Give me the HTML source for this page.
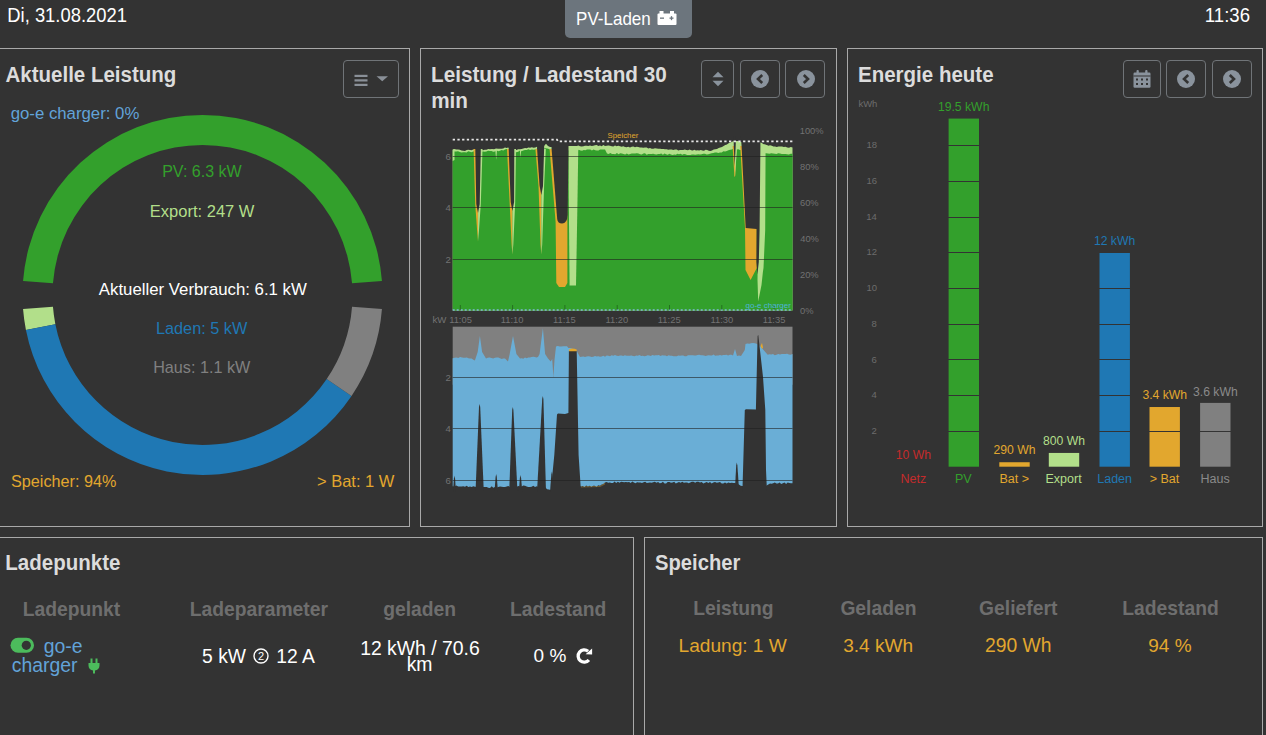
<!DOCTYPE html>
<html><head><meta charset="utf-8"><title>openWB</title>
<style>
html,body{margin:0;padding:0;background:#333333;width:1266px;height:735px;overflow:hidden;position:relative;font-family:"Liberation Sans",sans-serif}
.t{position:absolute;white-space:nowrap;font-family:"Liberation Sans",sans-serif}
.card{position:absolute;border:1px solid #a9a9a9;box-sizing:content-box}
.btn{position:absolute;border:1px solid #707478;border-radius:4px}
</style></head><body>
<div class="t" style="left:7.30px;top:6.90px;font-size:18.4px;line-height:18.4px;color:#ffffff;transform-origin:0 15.00px;transform:scaleY(1.08);">Di, 31.08.2021</div><div class="t" style="left:1204.83px;top:7.10px;font-size:18.6px;line-height:18.6px;color:#ffffff;transform-origin:0 15.00px;transform:scaleY(1.08);">11:36</div><div style="position:absolute;left:565px;top:-6px;width:127px;height:44px;background:#6c757d;border-radius:5px"></div><div class="t" style="left:576.12px;top:10.90px;font-size:17.0px;line-height:17.0px;color:#ffffff;transform-origin:0 14.00px;transform:scaleY(1.07);">PV-Laden</div><svg style="position:absolute;left:657px;top:11px" width="20" height="15" viewBox="0 0 20 15">
<rect x="2.5" y="0" width="4" height="3" fill="#fff"/><rect x="13" y="0" width="4" height="3" fill="#fff"/>
<rect x="0.5" y="2.5" width="19" height="11.5" rx="1" fill="#fff"/>
<rect x="3" y="6.5" width="4" height="1.3" fill="#6c757d"/>
<rect x="12.5" y="6.5" width="4" height="1.3" fill="#6c757d"/><rect x="13.85" y="5.15" width="1.3" height="4" fill="#6c757d"/>
</svg><div class="card" style="left:-10px;top:48px;width:418px;height:477px"></div><div class="card" style="left:420px;top:48px;width:415px;height:477px"></div><div class="card" style="left:847px;top:48px;width:414px;height:477px"></div><div class="card" style="left:-10px;top:537px;width:642px;height:222px"></div><div class="card" style="left:644px;top:537px;width:617px;height:222px"></div><div class="t" style="left:5.50px;top:64.90px;font-size:20.5px;line-height:20.5px;color:#dcdcdc;font-weight:700;transform-origin:0 17.00px;transform:scaleY(1.07);">Aktuelle Leistung</div><div class="btn" style="left:343px;top:60px;width:54px;height:36px"></div><svg style="position:absolute;left:343px;top:60px" width="57" height="38">
<rect x="11.5" y="14.8" width="13" height="2.2" fill="#8a9098"/>
<rect x="11.5" y="19.3" width="13" height="2.2" fill="#8a9098"/>
<rect x="11.5" y="23.8" width="13" height="2.2" fill="#8a9098"/>
<path d="M33.5 16.2 L45 16.2 L39.25 21.2 Z" fill="#8a9098"/>
</svg><div class="t" style="left:10.65px;top:105.80px;font-size:16.8px;line-height:16.8px;color:#62a3d9;">go-e charger: 0%</div><svg style="position:absolute;left:0;top:0" width="420" height="527"><path d="M381.95,280.88 A180.0,180.0 0 0 0 23.05,280.88 L52.96,283.23 A150.0,150.0 0 0 1 352.04,283.23 Z" fill="#33a02c"/><path d="M23.05,309.12 A180.0,180.0 0 0 0 25.93,329.96 L55.36,324.14 A150.0,150.0 0 0 1 52.96,306.77 Z" fill="#b2df8a"/><path d="M25.93,329.96 A180.0,180.0 0 0 0 351.55,395.92 L326.71,379.10 A150.0,150.0 0 0 1 55.36,324.14 Z" fill="#1f78b4"/><path d="M351.55,395.92 A180.0,180.0 0 0 0 381.95,309.12 L352.04,306.77 A150.0,150.0 0 0 1 326.71,379.10 Z" fill="#808080"/></svg><div class="t" style="left:162.19px;top:163.80px;font-size:16.0px;line-height:16.0px;color:#33a02c;">PV: 6.3 kW</div><div class="t" style="left:149.86px;top:202.80px;font-size:16.5px;line-height:16.5px;color:#b2df8a;">Export: 247 W</div><div class="t" style="left:98.85px;top:281.90px;font-size:16.8px;line-height:16.8px;color:#ffffff;">Aktueller Verbrauch: 6.1 kW</div><div class="t" style="left:155.95px;top:320.00px;font-size:16.3px;line-height:16.3px;color:#1f78b4;">Laden: 5 kW</div><div class="t" style="left:153.16px;top:358.70px;font-size:16.2px;line-height:16.2px;color:#808080;">Haus: 1.1 kW</div><div class="t" style="left:11.05px;top:473.20px;font-size:16.2px;line-height:16.2px;color:#e2a72e;">Speicher: 94%</div><div class="t" style="left:316.93px;top:472.90px;font-size:16.5px;line-height:16.5px;color:#e2a72e;">&gt; Bat: 1 W</div><div class="t" style="left:431.02px;top:65.00px;font-size:20.7px;line-height:20.7px;color:#dcdcdc;font-weight:700;transform-origin:0 17.00px;transform:scaleY(1.07);">Leistung / Ladestand 30</div><div class="t" style="left:431.23px;top:91.00px;font-size:20.7px;line-height:20.7px;color:#dcdcdc;font-weight:700;transform-origin:0 17.00px;transform:scaleY(1.07);">min</div><div class="btn" style="left:701px;top:60px;width:31px;height:36px"></div><div class="btn" style="left:740px;top:60px;width:38px;height:36px"></div><div class="btn" style="left:785px;top:60px;width:38px;height:36px"></div><svg style="position:absolute;left:701px;top:60px" width="34" height="38">
<path d="M11.5 17.2 L17 11.8 L22.5 17.2 Z" fill="#8a939d"/>
<path d="M11.5 20.8 L17 26.2 L22.5 20.8 Z" fill="#8a939d"/>
</svg><svg style="position:absolute;left:750px;top:69px" width="20" height="20" viewBox="-10 -10 20 20">
<circle cx="0" cy="0" r="9" fill="#8a939d"/><path d="M2.2,-4 L-2,0 L2.2,4" stroke="#333" stroke-width="2.6" fill="none" stroke-linecap="butt" stroke-linejoin="miter"/></svg><svg style="position:absolute;left:795.5px;top:69px" width="20" height="20" viewBox="-10 -10 20 20">
<circle cx="0" cy="0" r="9" fill="#8a939d"/><path d="M-2.2,-4 L2,0 L-2.2,4" stroke="#333" stroke-width="2.6" fill="none" stroke-linecap="butt" stroke-linejoin="miter"/></svg><div class="t" style="left:858.02px;top:64.80px;font-size:20.5px;line-height:20.5px;color:#dcdcdc;font-weight:700;transform-origin:0 17.00px;transform:scaleY(1.07);">Energie heute</div><div class="btn" style="left:1123px;top:60px;width:36px;height:36px"></div><div class="btn" style="left:1166px;top:60px;width:38px;height:36px"></div><div class="btn" style="left:1212px;top:60px;width:38px;height:36px"></div><svg style="position:absolute;left:1123px;top:60px" width="38" height="38">
<rect x="10.5" y="12.5" width="17" height="15.2" rx="1.2" fill="#8a939d"/>
<rect x="13.5" y="10" width="2.3" height="4" rx="1" fill="#8a939d"/><rect x="22.2" y="10" width="2.3" height="4" rx="1" fill="#8a939d"/>
<rect x="10.5" y="15.5" width="17" height="1" fill="#333"/>
<rect x="13" y="18.5" width="2" height="2" fill="#333"/><rect x="18" y="18.5" width="2" height="2" fill="#333"/><rect x="23" y="18.5" width="2" height="2" fill="#333"/>
<rect x="13" y="23" width="2" height="2" fill="#333"/><rect x="18" y="23" width="2" height="2" fill="#333"/><rect x="23" y="23" width="2" height="2" fill="#333"/>
</svg><svg style="position:absolute;left:1176px;top:69px" width="20" height="20" viewBox="-10 -10 20 20">
<circle cx="0" cy="0" r="9" fill="#8a939d"/><path d="M2.2,-4 L-2,0 L2.2,4" stroke="#333" stroke-width="2.6" fill="none" stroke-linecap="butt" stroke-linejoin="miter"/></svg><svg style="position:absolute;left:1222px;top:69px" width="20" height="20" viewBox="-10 -10 20 20">
<circle cx="0" cy="0" r="9" fill="#8a939d"/><path d="M-2.2,-4 L2,0 L-2.2,4" stroke="#333" stroke-width="2.6" fill="none" stroke-linecap="butt" stroke-linejoin="miter"/></svg><div class="t" style="left:5.33px;top:552.50px;font-size:20.5px;line-height:20.5px;color:#dcdcdc;font-weight:700;transform-origin:0 17.00px;transform:scaleY(1.07);">Ladepunkte</div><div class="t" style="left:22.71px;top:599.60px;font-size:19.3px;line-height:19.3px;color:#6e6e6e;font-weight:700;">Ladepunkt</div><div class="t" style="left:189.70px;top:599.60px;font-size:19.3px;line-height:19.3px;color:#6e6e6e;font-weight:700;">Ladeparameter</div><div class="t" style="left:383.21px;top:599.60px;font-size:19.3px;line-height:19.3px;color:#6e6e6e;font-weight:700;">geladen</div><div class="t" style="left:509.88px;top:599.60px;font-size:19.3px;line-height:19.3px;color:#6e6e6e;font-weight:700;">Ladestand</div><svg style="position:absolute;left:10px;top:637px" width="25" height="17">
<rect x="0.5" y="0.8" width="23.5" height="15" rx="7.5" fill="#4cbb5c"/>
<circle cx="16.3" cy="8.3" r="4.6" fill="#333"/>
<circle cx="16.3" cy="8.3" r="2" fill="#4cbb5c" opacity="0.0"/>
</svg><div class="t" style="left:43.75px;top:636.80px;font-size:19.4px;line-height:19.4px;color:#62a3d9;">go-e</div><div class="t" style="left:11.75px;top:655.50px;font-size:19.4px;line-height:19.4px;color:#62a3d9;">charger</div><svg style="position:absolute;left:88px;top:658px" width="12" height="16" viewBox="0 0 12 16">
<rect x="2.5" y="0.5" width="2" height="5" fill="#4cbb5c"/><rect x="7.5" y="0.5" width="2" height="5" fill="#4cbb5c"/>
<path d="M0.5 5 H11.5 V7.5 C11.5 10.5 9.5 12 7 12.5 V15.5 H5 V12.5 C2.5 12 0.5 10.5 0.5 7.5 Z" fill="#4cbb5c"/>
</svg><div class="t" style="left:202.05px;top:647.00px;font-size:19.3px;line-height:19.3px;color:#ffffff;">5 kW</div><svg style="position:absolute;left:252px;top:647px" width="18" height="18" viewBox="0 0 18 18">
<circle cx="9" cy="9" r="7" fill="none" stroke="#fff" stroke-width="1.4"/>
<text x="9" y="13.2" font-family="Liberation Sans" font-size="11" font-weight="400" fill="#fff" text-anchor="middle">2</text></svg><div class="t" style="left:276.20px;top:647.00px;font-size:19.3px;line-height:19.3px;color:#ffffff;">12 A</div><div class="t" style="left:360.14px;top:638.60px;font-size:19.4px;line-height:19.4px;color:#ffffff;">12 kWh / 70.6</div><div class="t" style="left:406.66px;top:654.50px;font-size:19.4px;line-height:19.4px;color:#ffffff;">km</div><div class="t" style="left:533.55px;top:645.80px;font-size:19.0px;line-height:19.0px;color:#ffffff;">0 %</div><svg style="position:absolute;left:575px;top:647px" width="19" height="19" viewBox="0 0 19 19">
<path d="M13.9,13.0 A6.1,6.1 0 1 1 13.1,4.3" stroke="#fff" stroke-width="3.3" fill="none"/>
<path d="M10.6,7.3 L17.1,1.6 L17.1,7.6 Z" fill="#fff"/>
</svg><div class="t" style="left:655.08px;top:552.60px;font-size:20.2px;line-height:20.2px;color:#dcdcdc;font-weight:700;transform-origin:0 17.00px;transform:scaleY(1.07);">Speicher</div><div class="t" style="left:693.17px;top:599.40px;font-size:19.3px;line-height:19.3px;color:#6e6e6e;font-weight:700;">Leistung</div><div class="t" style="left:840.39px;top:599.40px;font-size:19.3px;line-height:19.3px;color:#6e6e6e;font-weight:700;">Geladen</div><div class="t" style="left:979.09px;top:599.40px;font-size:19.3px;line-height:19.3px;color:#6e6e6e;font-weight:700;">Geliefert</div><div class="t" style="left:1122.28px;top:599.40px;font-size:19.3px;line-height:19.3px;color:#6e6e6e;font-weight:700;">Ladestand</div><div class="t" style="left:678.56px;top:635.60px;font-size:19.1px;line-height:19.1px;color:#e2a72e;">Ladung: 1 W</div><div class="t" style="left:843.19px;top:635.60px;font-size:19.1px;line-height:19.1px;color:#e2a72e;">3.4 kWh</div><div class="t" style="left:984.94px;top:635.80px;font-size:19.3px;line-height:19.3px;color:#e2a72e;">290 Wh</div><div class="t" style="left:1148.25px;top:635.80px;font-size:19.0px;line-height:19.0px;color:#e2a72e;">94 %</div>
<svg style="position:absolute;left:0;top:0" width="1266" height="735"><polygon points="452.7,310.4 452.7,149.2 454.5,149.0 456.2,149.5 458.0,149.6 459.8,149.8 461.5,150.4 463.2,150.8 465.0,151.0 466.7,150.1 468.3,149.7 470.0,150.0 471.6,150.2 473.2,149.4 474.8,149.5 476.4,149.3 478.1,150.3 479.7,149.8 481.3,150.0 483.0,150.2 484.8,149.7 486.5,149.7 488.3,148.9 490.0,149.2 492.0,149.1 494.0,149.2 496.0,148.5 498.0,148.7 500.0,148.8 501.6,148.8 503.3,148.5 504.9,147.5 506.6,148.1 508.2,147.5 509.8,148.2 511.5,148.5 513.1,148.8 514.8,150.0 516.5,150.1 518.2,149.3 519.9,149.3 521.6,149.1 523.3,148.6 525.0,148.0 526.7,148.3 528.4,147.5 530.1,147.8 531.9,147.2 533.6,147.7 535.3,147.4 537.0,146.8 538.8,146.1 540.5,146.0 542.2,145.9 544.0,146.0 546.0,143.8 548.0,146.0 550.0,147.0 552.2,147.0 553.8,146.8 555.5,147.0 557.1,146.5 558.7,146.6 560.4,146.4 562.0,146.2 563.6,146.4 565.2,146.3 566.9,146.6 568.5,146.0 570.1,146.2 571.8,146.5 573.5,146.4 575.1,146.5 576.8,146.1 578.4,145.5 580.0,146.3 581.7,146.4 583.4,146.3 585.0,145.8 586.7,145.8 588.3,146.0 590.0,145.4 591.7,146.1 593.3,145.7 595.0,145.3 596.7,145.0 598.3,146.0 600.0,145.5 601.7,146.2 603.3,145.1 605.0,146.1 606.7,145.7 608.3,145.4 610.0,145.7 611.7,146.3 613.3,146.5 615.0,145.6 616.7,146.3 618.3,145.7 620.0,146.3 621.7,146.7 623.3,146.3 625.0,147.1 626.7,147.3 628.3,146.8 630.0,147.5 631.7,146.8 633.3,146.6 635.0,147.3 636.7,146.7 638.3,147.0 640.0,147.5 641.7,147.5 643.3,147.8 645.0,147.4 646.7,147.4 648.3,148.5 650.0,147.9 651.7,148.8 653.3,148.8 655.0,148.3 656.7,148.5 658.3,148.7 660.0,148.8 661.7,149.1 663.3,149.1 665.0,149.2 666.7,149.3 668.3,149.8 670.0,149.4 671.7,149.4 673.3,149.9 675.0,149.4 676.7,149.6 678.3,150.5 680.0,150.0 681.6,150.1 683.2,150.1 684.8,149.5 686.4,150.0 688.0,150.2 689.6,149.6 691.2,150.3 692.8,150.4 694.4,149.7 696.0,150.4 697.6,150.2 699.2,150.5 700.8,150.1 702.4,150.6 704.0,150.7 705.6,149.8 707.2,149.9 708.8,150.7 710.4,151.0 712.0,150.5 713.7,149.6 715.3,149.3 717.0,148.9 718.7,148.0 720.3,147.4 722.0,147.0 723.6,145.9 725.3,145.1 726.9,144.5 728.6,143.2 730.2,142.4 731.9,142.0 733.5,140.8 736.0,141.0 738.0,140.9 740.0,142.0 741.7,142.1 743.4,142.4 745.1,141.9 746.8,141.8 748.5,142.6 750.2,141.9 751.9,141.9 753.6,142.3 755.3,142.6 757.0,141.9 758.7,142.2 760.4,142.5 762.0,143.0 763.7,144.4 765.3,144.7 766.9,144.9 768.5,145.7 770.1,145.2 771.8,145.7 773.4,146.4 775.0,146.5 776.8,147.1 778.5,146.6 780.2,146.5 782.0,146.4 783.8,147.0 785.5,146.7 787.2,147.6 789.0,147.7 790.8,147.0 792.5,147.5 792.5,310.4" fill="#b2df8a" /><polygon points="452.7,310.4 452.7,151.2 454.5,151.4 456.2,151.6 458.0,151.3 459.8,151.9 461.5,152.4 463.2,152.3 465.0,152.2 466.6,152.6 468.3,151.2 469.9,151.7 471.5,152.2 473.2,151.6 474.8,151.2 476.4,151.9 478.1,151.0 479.7,151.6 481.3,151.8 483.0,151.4 484.7,151.7 486.4,151.6 488.1,150.8 489.8,150.9 491.5,150.9 493.2,151.7 494.9,151.4 496.6,150.5 498.3,151.3 500.0,150.8 501.6,150.1 503.3,150.5 504.9,149.6 506.6,149.1 508.2,149.6 509.8,150.7 511.5,150.3 513.1,150.9 514.8,151.8 516.5,152.2 518.2,151.7 519.9,150.6 521.6,151.2 523.3,150.4 525.0,150.0 526.7,150.1 528.4,149.2 530.1,150.1 531.9,149.6 533.6,149.8 535.3,149.5 537.0,148.8 538.8,148.4 540.5,148.5 542.2,148.1 544.0,148.5 545.6,148.3 547.3,148.5 548.9,149.1 550.6,149.8 552.2,150.0 553.8,149.4 555.5,150.3 557.1,149.9 558.7,149.9 560.4,150.7 562.0,150.3 563.6,150.1 565.2,150.4 566.9,150.7 568.5,150.5 570.2,149.9 571.9,151.1 573.6,149.8 575.4,150.8 577.1,150.9 578.8,149.7 580.5,150.4 582.1,150.7 583.8,150.1 585.4,150.3 587.0,149.5 588.7,149.5 590.3,149.6 591.9,150.6 593.6,149.5 595.2,150.2 596.8,150.4 598.5,150.4 600.1,149.5 601.7,149.4 603.4,149.6 605.0,149.5 607.0,153.6 608.7,154.0 610.3,153.1 612.0,154.0 613.6,154.1 615.3,154.2 616.9,153.0 618.6,154.3 620.2,153.2 621.9,153.5 623.5,153.9 625.2,154.4 626.8,153.6 628.5,154.4 630.2,153.9 631.8,153.6 633.5,153.6 635.1,153.4 636.8,153.3 638.4,153.4 640.1,154.2 641.7,154.6 643.4,153.5 645.0,153.3 646.7,154.7 648.3,154.0 650.0,154.0 651.6,153.9 653.2,153.7 654.8,154.2 656.5,154.5 658.1,154.0 659.7,154.0 661.3,153.5 662.9,154.7 664.5,153.5 666.1,154.2 667.7,154.7 669.4,153.7 671.0,154.5 672.6,154.9 674.2,154.4 675.8,154.7 677.4,153.7 679.0,154.2 680.6,153.8 682.3,154.8 683.9,154.1 685.5,154.3 687.1,155.1 688.7,154.9 690.3,155.1 691.9,154.4 693.5,154.4 695.2,154.8 696.8,154.4 698.4,154.2 700.0,154.5 701.7,154.2 703.3,153.7 705.0,153.8 706.7,154.5 708.3,154.3 710.0,153.7 711.7,153.3 713.3,152.9 715.0,152.4 716.7,152.5 718.3,153.1 720.0,152.5 721.7,152.5 723.4,151.3 725.1,151.4 726.8,150.9 728.4,150.3 730.1,149.7 731.8,149.4 733.5,148.5 735.1,148.7 736.8,149.5 738.4,149.3 740.0,150.0 741.7,150.1 743.4,150.7 745.1,150.8 746.8,150.4 748.5,151.5 750.2,151.2 751.9,151.3 753.6,150.6 755.3,151.6 757.0,151.3 758.7,152.1 760.4,152.0 762.3,152.4 764.1,153.3 766.0,153.3 767.8,153.5 769.5,153.8 771.2,153.2 773.0,153.6 774.8,153.8 776.5,153.9 778.2,153.3 780.0,153.5 781.8,154.0 783.6,154.1 785.4,153.9 787.1,154.3 788.9,154.4 790.7,153.8 792.5,153.8 792.5,310.4" fill="#33a02c" /><polygon points="452.7,150.0 454.5,150.0 454.5,160.0 452.7,161.0" fill="#b2df8a" /><polygon points="473.6,149.0 475.2,204.0 477.2,231.5 478.0,241.5 478.1,212.0 478.1,149.0" fill="#e2a72e" /><polygon points="478.1,149.0 478.1,212.0 478.0,241.5 478.9,231.5 480.8,204.0 482.5,149.0" fill="#b2df8a" /><polygon points="475.0,136.0 475.3,149.0 476.3,204.0 478.0,213.0 479.7,204.0 480.8,149.0 481.1,136.0" fill="#333333" /><polygon points="507.0,149.0 509.6,202.0 511.6,244.5 512.4,254.5 512.5,210.0 511.5,149.0" fill="#e2a72e" /><polygon points="511.5,149.0 512.5,210.0 512.4,254.5 513.3,244.5 515.2,202.0 516.0,149.0" fill="#b2df8a" /><polygon points="508.4,136.0 508.7,149.0 510.7,202.0 512.4,211.0 514.1,202.0 514.3,149.0 514.6,136.0" fill="#333333" /><polygon points="535.4,149.0 538.5,186.0 540.5,244.6 541.3,254.6 541.4,194.0 540.6,149.0" fill="#e2a72e" /><polygon points="540.6,149.0 541.4,194.0 541.3,254.6 542.2,244.6 544.1,186.0 545.8,149.0" fill="#b2df8a" /><polygon points="536.8,136.0 537.1,149.0 539.6,186.0 541.3,195.0 543.0,186.0 544.1,149.0 544.4,136.0" fill="#333333" /><polygon points="495.3,150.0 496.2,160.0 497.0,150.0" fill="#b2df8a" /><polygon points="519.8,150.0 520.5,158.0 521.2,150.0" fill="#b2df8a" /><polygon points="549.6,149.0 555.6,222.0 556.3,283.0 559.0,287.0 565.0,287.0 567.4,283.0 567.4,222.0 566.0,149.0" fill="#e2a72e" /><polygon points="568.4,146.0 578.3,146.0 577.5,200.0 576.0,285.5 569.6,285.5 568.8,200.0" fill="#b2df8a" /><path d="M550.9,136 L568.5,136 L568.5,149 L567.6,215 Q567.2,223.5 562,223.5 Q557.8,223.5 557.2,219 L551.6,149 Z" fill="#333333"/><polygon points="732.6,146.0 734.4,177.0 735.2,176.0 736.6,146.0" fill="#e2a72e" /><polygon points="734.6,146.0 734.9,177.0 737.2,146.0" fill="#b2df8a" /><polygon points="733.6,136.0 733.8,146.0 734.7,166.0 735.7,146.0 735.9,136.0" fill="#333333" /><polygon points="740.2,146.0 745.0,228.0 745.5,270.0 750.6,280.0 756.8,268.0 756.8,200.0 756.0,146.0" fill="#e2a72e" /><polygon points="760.2,144.0 765.6,144.5 765.2,230.0 763.5,268.0 762.9,272.0 761.5,285.0 758.2,301.5 757.5,280.0 758.5,200.0" fill="#b2df8a" /><polygon points="740.8,136.0 760.4,136.0 760.4,146.0 759.6,230.0 758.8,262.0 757.4,274.6 756.4,262.0 756.6,229.0 745.7,228.0 741.6,146.0" fill="#333333" /><line x1="452.7" x2="792.5" y1="156.5" y2="156.5" stroke="#202020" stroke-opacity="0.6" stroke-width="1"/><line x1="452.7" x2="792.5" y1="207.5" y2="207.5" stroke="#202020" stroke-opacity="0.6" stroke-width="1"/><line x1="452.7" x2="792.5" y1="259.5" y2="259.5" stroke="#202020" stroke-opacity="0.6" stroke-width="1"/><path d="M452.7,139.7 L557.1,139.7 L558,141.4 L792.5,141.4" stroke="#e6e6e6" stroke-width="1.7" stroke-dasharray="2.3,2.4" fill="none"/><line x1="452.7" x2="792.5" y1="310" y2="310" stroke="#7fb6d8" stroke-width="1.4" stroke-dasharray="2,2"/><line x1="460.3" x2="460.3" y1="305" y2="310" stroke="#000" stroke-opacity="0.3" stroke-width="1"/><line x1="512.6" x2="512.6" y1="305" y2="310" stroke="#000" stroke-opacity="0.3" stroke-width="1"/><line x1="564.9" x2="564.9" y1="305" y2="310" stroke="#000" stroke-opacity="0.3" stroke-width="1"/><line x1="617.2" x2="617.2" y1="305" y2="310" stroke="#000" stroke-opacity="0.3" stroke-width="1"/><line x1="669.5" x2="669.5" y1="305" y2="310" stroke="#000" stroke-opacity="0.3" stroke-width="1"/><line x1="721.8" x2="721.8" y1="305" y2="310" stroke="#000" stroke-opacity="0.3" stroke-width="1"/><line x1="774.1" x2="774.1" y1="305" y2="310" stroke="#000" stroke-opacity="0.3" stroke-width="1"/><rect x="452.7" y="326.7" width="339.8" height="58" fill="#808080"/><polygon points="452.7,358.2 454.6,357.8 456.4,357.4 458.3,358.0 460.1,357.0 462.0,357.5 463.6,357.8 465.2,357.7 466.8,357.5 468.4,358.3 470.0,358.5 471.6,358.5 473.3,359.7 474.9,360.4 477.7,352.0 479.9,336.0 482.1,352.0 486.0,358.5 487.8,357.8 489.6,357.6 491.4,358.0 493.2,358.4 495.0,357.8 496.7,357.4 498.3,357.6 500.0,358.3 501.7,358.9 503.3,358.5 505.0,358.5 508.0,361.5 509.7,354.0 513.0,336.0 516.4,354.0 520.0,358.5 521.7,358.2 523.3,358.8 525.0,357.4 526.7,358.3 528.3,357.4 530.0,357.5 531.6,356.9 533.2,356.8 534.8,356.9 536.4,357.5 538.0,357.0 539.6,354.0 542.9,328.3 545.1,354.0 548.0,358.5 550.7,361.5 552.2,359.0 553.4,377.0 554.5,360.0 556.0,346.6 557.8,346.1 559.7,346.6 561.5,346.6 563.3,346.2 565.2,346.3 567.0,346.2 568.4,348.0 570.1,348.0 571.7,348.6 573.4,349.4 575.0,350.7 576.7,351.0 580.0,357.0 581.7,356.8 583.3,356.6 585.0,356.9 586.7,356.6 588.3,356.3 590.0,356.5 591.7,356.9 593.3,356.7 595.0,356.0 596.7,356.4 598.3,356.3 600.0,356.7 601.7,356.4 603.3,355.8 605.0,356.7 606.7,355.4 608.3,355.8 610.0,356.2 611.7,355.3 613.3,355.7 615.0,355.0 616.7,355.8 618.3,355.9 620.0,355.5 621.6,355.6 623.2,356.0 624.9,355.3 626.5,355.8 628.1,355.7 629.7,355.7 631.4,355.5 633.0,356.0 634.6,356.2 636.2,355.5 637.8,355.8 639.5,355.0 641.1,355.9 642.7,355.8 644.3,356.3 645.9,356.1 647.6,355.3 649.2,355.5 650.8,355.9 652.4,355.0 654.1,355.6 655.7,355.2 657.3,355.2 658.9,355.1 660.5,356.1 662.2,355.2 663.8,355.4 665.4,355.6 667.0,356.3 668.6,355.2 670.3,355.7 671.9,355.8 673.5,356.3 675.1,356.2 676.8,356.3 678.4,355.5 680.0,355.8 681.6,355.6 683.2,355.5 684.8,356.2 686.4,356.3 688.0,355.2 689.6,355.2 691.2,355.2 692.8,355.2 694.4,355.5 696.0,355.6 697.6,355.1 699.2,354.7 700.8,355.3 702.4,355.2 704.0,355.4 705.6,355.9 707.2,355.5 708.8,355.2 710.4,355.4 712.0,355.4 713.6,354.5 715.2,355.7 716.8,355.5 718.4,355.6 720.0,355.0 721.6,355.5 723.2,355.0 724.9,355.0 726.5,354.7 728.1,355.5 729.8,354.8 731.4,354.8 733.0,355.5 735.0,349.0 737.0,356.0 739.0,355.6 741.0,356.0 744.8,350.0 745.5,344.0 747.4,343.5 749.2,343.7 751.0,343.2 752.9,343.1 754.8,343.3 756.6,343.7 760.0,346.0 767.7,354.8 769.5,354.2 771.2,354.5 773.0,354.0 774.7,355.2 776.5,354.7 778.2,354.1 780.0,354.5 781.8,354.1 783.6,354.1 785.4,354.1 787.1,353.7 788.9,354.6 790.7,354.8 792.5,354.0 792.5,483.2 790.9,483.2 789.3,483.0 787.7,482.6 786.1,483.9 784.5,482.4 782.9,483.3 781.2,484.1 779.6,482.6 778.0,483.5 776.4,483.6 774.8,482.6 773.2,483.2 771.6,483.8 770.0,483.5 767.9,484.7 765.8,486.0 764.1,486.4 762.5,485.4 760.8,485.5 759.2,485.3 757.5,486.0 755.9,486.8 754.2,486.2 752.5,486.5 750.9,485.8 749.2,486.4 747.6,485.3 745.9,485.6 744.3,486.3 742.6,486.0 740.7,485.7 738.9,484.5 737.0,484.0 735.2,483.0 733.5,483.1 731.8,482.7 730.0,483.0 728.3,482.6 726.7,483.5 725.0,482.4 723.3,483.6 721.7,483.6 720.0,482.1 718.3,482.6 716.7,482.8 715.0,481.9 713.3,482.6 711.7,483.5 710.0,482.0 708.3,482.9 706.7,482.0 705.0,482.8 703.3,483.4 701.7,482.1 700.0,482.6 698.4,481.7 696.8,481.8 695.2,482.7 693.5,481.7 691.9,481.8 690.3,482.6 688.7,483.3 687.1,482.4 685.5,482.4 683.9,482.8 682.3,481.8 680.6,482.7 679.0,482.0 677.4,482.8 675.8,483.4 674.2,481.7 672.6,482.6 671.0,482.7 669.4,481.9 667.7,482.1 666.1,483.4 664.5,483.4 662.9,481.8 661.3,482.9 659.7,483.3 658.1,482.0 656.5,482.7 654.8,481.7 653.2,482.3 651.6,482.8 650.0,482.5 648.4,482.7 646.8,483.0 645.2,481.7 643.6,482.2 642.0,483.1 640.4,482.6 638.8,482.4 637.1,482.3 635.5,483.3 633.9,482.6 632.3,481.6 630.7,483.0 629.1,482.1 627.5,482.3 625.9,481.9 624.3,482.3 622.7,482.1 621.1,481.7 619.5,482.7 617.9,481.7 616.2,482.9 614.6,481.6 613.0,482.9 611.4,483.0 609.8,482.4 608.2,482.8 606.6,482.0 605.0,482.4 603.3,483.9 601.7,484.5 600.0,485.7 598.3,485.3 596.5,486.7 594.8,485.7 593.1,485.7 591.4,486.7 589.6,485.8 587.9,486.4 586.2,485.6 584.5,486.9 582.7,485.9 581.0,486.4 579.3,485.8 577.6,487.7 576.0,486.4 574.3,488.0 572.6,488.3 570.9,487.8 569.2,486.9 567.5,487.2 565.9,487.7 564.2,488.2 562.5,488.8 560.8,489.6 559.1,488.7 557.4,488.6 555.8,489.5 554.1,488.9 552.4,489.1 550.7,490.0 548.9,489.5 547.1,489.2 545.4,487.4 543.6,487.5 541.8,487.4 540.0,486.4 538.3,486.9 536.7,486.2 535.0,487.1 533.3,485.8 531.7,486.8 530.0,486.9 528.3,487.1 526.7,486.4 525.0,485.7 523.3,485.6 521.7,486.5 520.0,486.4 518.3,485.9 516.7,486.8 515.0,486.0 513.3,487.3 511.7,486.4 510.0,487.0 508.3,486.1 506.7,486.4 505.0,486.9 503.3,487.1 501.7,486.8 500.0,486.4 498.3,487.0 496.7,487.8 495.0,487.1 493.3,487.8 491.7,486.2 490.0,487.9 488.3,487.7 486.7,487.1 485.0,487.0 483.3,487.1 481.7,487.7 480.0,487.0 478.3,486.1 476.7,487.1 475.0,486.8 473.3,486.3 471.7,487.0 470.0,486.5 468.3,486.9 466.7,485.8 465.0,486.8 463.3,486.3 461.7,486.4 460.0,486.4 458.2,486.6 456.4,485.5 454.5,486.4 452.7,486.2" fill="#6aaed6" /><polygon points="581.0,486.6 600.0,486.0 605.0,482.8 605.0,484.5 600.0,487.0 581.0,487.5" fill="#e2a72e" opacity="0.35"/><polygon points="475.5,492.0 479.0,407.0 479.6,404.0 480.2,407.0 483.8,492.0" fill="#333333" /><polygon points="509.2,492.0 512.2,410.1 512.8,407.1 513.4,410.1 517.5,492.0" fill="#333333" /><polygon points="537.0,492.0 542.2,399.0 542.8,396.0 543.4,399.0 546.0,492.0" fill="#333333" /><polygon points="453.0,492.0 453.9,478.7 454.5,475.7 455.1,478.7 456.0,492.0" fill="#333333" /><polygon points="494.5,492.0 495.6,477.0 496.2,474.0 496.8,477.0 498.0,492.0" fill="#333333" /><polygon points="518.8,492.0 519.9,478.1 520.5,475.1 521.1,478.1 522.3,492.0" fill="#333333" /><polygon points="550.0,492.0 551.3,474.6 551.9,471.6 552.5,474.6 553.5,492.0" fill="#333333" /><polygon points="550.7,492.0 554.3,455.0 557.0,414.5 558.0,413.5 565.0,414.0 568.4,413.0 568.9,351.0 576.7,351.0 578.6,455.0 581.0,492.0" fill="#333333" /><polygon points="734.8,492.0 736.2,465.5 736.8,462.5 737.4,465.5 739.2,492.0" fill="#333333" /><polygon points="742.4,492.0 744.8,410.0 746.0,409.3 755.9,409.5 757.6,336.0 758.3,335.0 763.0,377.0 765.3,410.0 766.0,470.0 767.0,492.0" fill="#333333" /><path d="M568.9,351.2 L576.7,351.2 L576.7,349.5 Q572,347.6 568.9,349.5 Z" fill="#e2a72e"/><polygon points="760.5,346.0 762.0,343.0 763.0,347.5 762.0,349.0" fill="#e2a72e" /><line x1="452.7" x2="792.5" y1="377.5" y2="377.5" stroke="#202020" stroke-opacity="0.6" stroke-width="1"/><line x1="452.7" x2="792.5" y1="428.5" y2="428.5" stroke="#202020" stroke-opacity="0.6" stroke-width="1"/><line x1="452.7" x2="792.5" y1="480.5" y2="480.5" stroke="#202020" stroke-opacity="0.6" stroke-width="1"/></svg><div class="t" style="left:445.50px;top:152.10px;font-size:9.6px;line-height:9.6px;color:#727272;">6</div><div class="t" style="left:445.38px;top:203.20px;font-size:9.6px;line-height:9.6px;color:#727272;">4</div><div class="t" style="left:445.62px;top:254.60px;font-size:9.6px;line-height:9.6px;color:#727272;">2</div><div class="t" style="left:445.62px;top:372.70px;font-size:9.6px;line-height:9.6px;color:#727272;">2</div><div class="t" style="left:445.38px;top:424.40px;font-size:9.6px;line-height:9.6px;color:#727272;">4</div><div class="t" style="left:445.50px;top:476.10px;font-size:9.6px;line-height:9.6px;color:#727272;">6</div><div class="t" style="left:799.75px;top:127.20px;font-size:9.3px;line-height:9.3px;color:#727272;">100%</div><div class="t" style="left:800.12px;top:163.30px;font-size:9.3px;line-height:9.3px;color:#727272;">80%</div><div class="t" style="left:800.00px;top:198.80px;font-size:9.3px;line-height:9.3px;color:#727272;">60%</div><div class="t" style="left:800.25px;top:235.40px;font-size:9.3px;line-height:9.3px;color:#727272;">40%</div><div class="t" style="left:800.00px;top:271.10px;font-size:9.3px;line-height:9.3px;color:#727272;">20%</div><div class="t" style="left:800.12px;top:307.00px;font-size:9.3px;line-height:9.3px;color:#727272;">0%</div><div class="t" style="left:432.38px;top:315.00px;font-size:9.7px;line-height:9.7px;color:#727272;">kW</div><div class="t" style="left:449.14px;top:315.20px;font-size:9.4px;line-height:9.4px;color:#727272;">11:05</div><div class="t" style="left:500.74px;top:315.20px;font-size:9.4px;line-height:9.4px;color:#727272;">11:10</div><div class="t" style="left:552.94px;top:315.20px;font-size:9.4px;line-height:9.4px;color:#727272;">11:15</div><div class="t" style="left:605.44px;top:315.20px;font-size:9.4px;line-height:9.4px;color:#727272;">11:20</div><div class="t" style="left:657.84px;top:315.20px;font-size:9.4px;line-height:9.4px;color:#727272;">11:25</div><div class="t" style="left:710.44px;top:315.20px;font-size:9.4px;line-height:9.4px;color:#727272;">11:30</div><div class="t" style="left:762.64px;top:315.20px;font-size:9.4px;line-height:9.4px;color:#727272;">11:35</div><div class="t" style="left:607.56px;top:132.00px;font-size:7.8px;line-height:7.8px;color:#e2a72e;">Speicher</div><div class="t" style="left:745.55px;top:301.50px;font-size:8.0px;line-height:8.0px;color:#4fb3d9;">go-e charger</div><svg style="position:absolute;left:0;top:0" width="1266" height="735"><rect x="948.6" y="118.59" width="30.4" height="348.11" fill="#33a02c"/><rect x="999.3" y="462.23" width="30.4" height="4.47" fill="#e2a72e"/><rect x="1048.8" y="452.94" width="30.4" height="13.76" fill="#b2df8a"/><rect x="1099.5" y="252.26" width="30.4" height="214.44" fill="#1f78b4"/><rect x="1149.5" y="407.01" width="30.4" height="59.69" fill="#e2a72e"/><rect x="1200.1" y="402.90" width="30.4" height="63.80" fill="#808080"/><line x1="880" x2="1240" y1="431.50" y2="431.50" stroke="#333333" stroke-width="1"/><line x1="880" x2="1240" y1="395.50" y2="395.50" stroke="#333333" stroke-width="1"/><line x1="880" x2="1240" y1="359.50" y2="359.50" stroke="#333333" stroke-width="1"/><line x1="880" x2="1240" y1="324.50" y2="324.50" stroke="#333333" stroke-width="1"/><line x1="880" x2="1240" y1="288.50" y2="288.50" stroke="#333333" stroke-width="1"/><line x1="880" x2="1240" y1="252.50" y2="252.50" stroke="#333333" stroke-width="1"/><line x1="880" x2="1240" y1="217.50" y2="217.50" stroke="#333333" stroke-width="1"/><line x1="880" x2="1240" y1="181.50" y2="181.50" stroke="#333333" stroke-width="1"/><line x1="880" x2="1240" y1="145.50" y2="145.50" stroke="#333333" stroke-width="1"/></svg><div class="t" style="left:871.62px;top:426.16px;font-size:9.5px;line-height:9.5px;color:#6c6c6c;">2</div><div class="t" style="left:871.50px;top:390.42px;font-size:9.5px;line-height:9.5px;color:#6c6c6c;">4</div><div class="t" style="left:871.62px;top:354.68px;font-size:9.5px;line-height:9.5px;color:#6c6c6c;">6</div><div class="t" style="left:871.62px;top:318.94px;font-size:9.5px;line-height:9.5px;color:#6c6c6c;">8</div><div class="t" style="left:866.38px;top:283.20px;font-size:9.5px;line-height:9.5px;color:#6c6c6c;">10</div><div class="t" style="left:866.38px;top:247.46px;font-size:9.5px;line-height:9.5px;color:#6c6c6c;">12</div><div class="t" style="left:866.25px;top:211.72px;font-size:9.5px;line-height:9.5px;color:#6c6c6c;">14</div><div class="t" style="left:866.38px;top:175.98px;font-size:9.5px;line-height:9.5px;color:#6c6c6c;">16</div><div class="t" style="left:866.38px;top:140.24px;font-size:9.5px;line-height:9.5px;color:#6c6c6c;">18</div><div class="t" style="left:858.38px;top:98.50px;font-size:9.5px;line-height:9.5px;color:#6c6c6c;">kWh</div><div class="t" style="left:895.75px;top:449.20px;font-size:12.2px;line-height:12.2px;color:#c42b2b;">10 Wh</div><div class="t" style="left:900.44px;top:472.70px;font-size:12.5px;line-height:12.5px;color:#c42b2b;">Netz</div><div class="t" style="left:937.93px;top:101.30px;font-size:12.2px;line-height:12.2px;color:#33a02c;">19.5 kWh</div><div class="t" style="left:954.99px;top:472.70px;font-size:12.5px;line-height:12.5px;color:#33a02c;">PV</div><div class="t" style="left:993.50px;top:444.20px;font-size:12.2px;line-height:12.2px;color:#e2a72e;">290 Wh</div><div class="t" style="left:999.50px;top:472.70px;font-size:12.5px;line-height:12.5px;color:#e2a72e;">Bat &gt;</div><div class="t" style="left:1043.06px;top:435.20px;font-size:12.2px;line-height:12.2px;color:#b2df8a;">800 Wh</div><div class="t" style="left:1045.50px;top:472.70px;font-size:12.5px;line-height:12.5px;color:#b2df8a;">Export</div><div class="t" style="left:1093.89px;top:235.20px;font-size:12.2px;line-height:12.2px;color:#1f78b4;">12 kWh</div><div class="t" style="left:1097.26px;top:472.70px;font-size:12.5px;line-height:12.5px;color:#1f78b4;">Laden</div><div class="t" style="left:1142.39px;top:389.00px;font-size:12.2px;line-height:12.2px;color:#e2a72e;">3.4 kWh</div><div class="t" style="left:1149.64px;top:472.70px;font-size:12.5px;line-height:12.5px;color:#e2a72e;">&gt; Bat</div><div class="t" style="left:1192.99px;top:385.50px;font-size:12.2px;line-height:12.2px;color:#8a8a8a;">3.6 kWh</div><div class="t" style="left:1200.49px;top:472.70px;font-size:12.5px;line-height:12.5px;color:#8a8a8a;">Haus</div>
</body></html>
